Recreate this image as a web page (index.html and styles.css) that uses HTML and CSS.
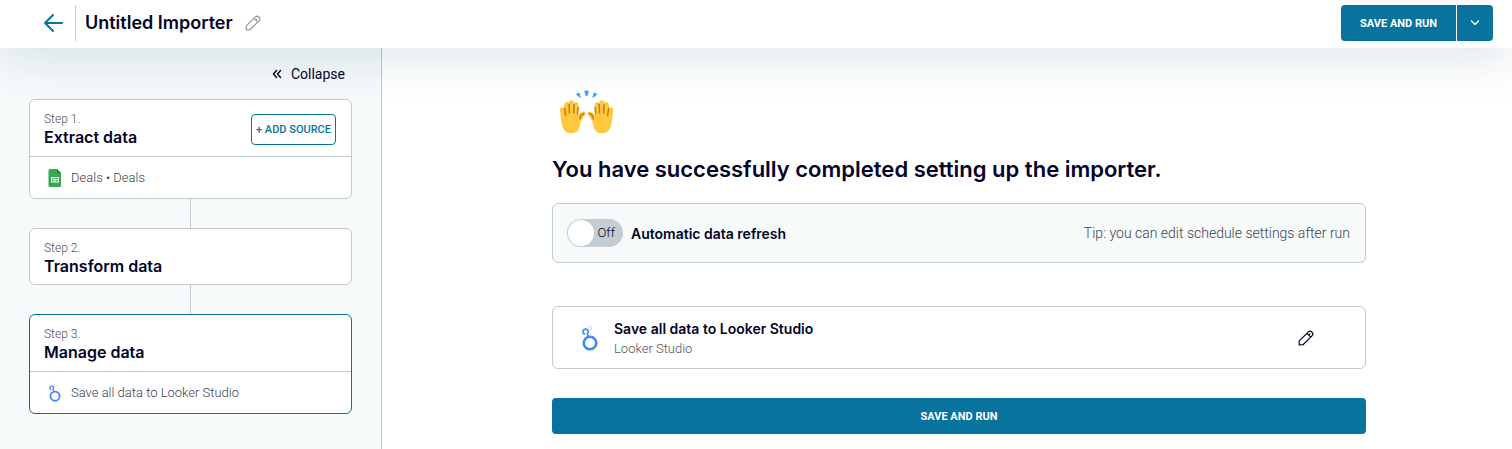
FILE: index.html
```html
<!DOCTYPE html>
<html lang="en">
<head>
    <meta charset="UTF-8">
    <meta name="viewport" content="width=device-width, initial-scale=1.0">
    <title>Untitled Importer</title>
    <link rel="stylesheet" href="styles.css">
</head>
<body>
    <!-- shared icons -->
    <svg class="icon-defs" aria-hidden="true">
        <symbol id="icon-pencil" viewBox="0 0 16 16">
            <path d="M1.2 14.8 1.3 10.9 10.4 1.8a2.2 2.2 0 0 1 3.1 0l.7.7a2.2 2.2 0 0 1 0 3.1L5 14.7zM9 3.4l3.7 3.7M10.7 5.1l1.5-1.5" fill="none" stroke="currentColor" stroke-width="1.2" stroke-linejoin="round"/>
        </symbol>
        <symbol id="icon-looker" viewBox="0 0 18 26">
            <circle cx="9" cy="18" r="6.3" fill="none" stroke="#4285f4" stroke-width="2.5"/>
            <path d="M4 9.200A2.600 2.600 0 1 1 7 7.500M7.200 6.500 6.300 8.800 7.300 11.500" fill="none" stroke="#4285f4" stroke-width="1.7"/>
            <circle cx="9" cy="3.200" r="1.800" fill="none" stroke="#d6e5fb" stroke-width="1.2"/>
        </symbol>
    </svg>

    <header class="header">
        <button class="icon-button back" aria-label="Back">
            <svg width="20" height="20" viewBox="0 0 20 20" fill="none" stroke="currentColor" stroke-width="2" stroke-linecap="round" stroke-linejoin="round">
                <path d="M19 10H2M10 2 2 10l8 8"/>
            </svg>
        </button>
        <div class="header-title">
            <h1>Untitled Importer</h1>
            <button class="icon-button rename" aria-label="Rename">
                <svg width="16" height="16"><use href="#icon-pencil"/></svg>
            </button>
        </div>
        <div class="button-group">
            <button class="button">SAVE AND RUN</button>
            <button class="button button-more" aria-label="More options">
                <svg width="10" height="6" viewBox="0 0 10 6" fill="none" stroke="currentColor" stroke-width="1.3" stroke-linecap="round" stroke-linejoin="round">
                    <path d="M1.5 1 5 4.5 8.5 1"/>
                </svg>
            </button>
        </div>
    </header>

    <div class="layout">
        <aside class="sidebar">
            <button class="collapse">
                <svg width="10" height="10" viewBox="0 0 10 10" fill="none" stroke="currentColor" stroke-width="1.5" stroke-linecap="round" stroke-linejoin="round">
                    <path d="M4.500 1.500 1.500 5l3 3.500M8.500 1.500 5.500 5l3 3.500"/>
                </svg>
                Collapse
            </button>

            <ol class="steps">
                <li class="step">
                    <div class="step-head">
                        <div>
                            <div class="step-number">Step 1.</div>
                            <h2>Extract data</h2>
                        </div>
                        <button class="button-outline">+ ADD SOURCE</button>
                    </div>
                    <div class="step-item">
                        <svg width="14" height="18" viewBox="0 0 14 18">
                            <path d="M2 0h7l4 4v12.500a1.500 1.500 0 0 1-1.500 1.500H2A1.500 1.500 0 0 1 .5 16.500v-15A1.500 1.500 0 0 1 2 0z" fill="#34a853"/>
                            <path d="M9 0l4 4H9z" fill="#188038"/>
                            <path d="M3 8h8v5.500H3z" fill="#fff"/>
                            <path d="M4 9h2.500v1.300H4zM7.500 9H10v1.300H7.500zM4 11.300h2.500v1.200H4zM7.500 11.300H10v1.200H7.500z" fill="#34a853"/>
                        </svg>
                        Deals • Deals
                    </div>
                </li>
                <li class="step">
                    <div class="step-head">
                        <div>
                            <div class="step-number">Step 2.</div>
                            <h2>Transform data</h2>
                        </div>
                    </div>
                </li>
                <li class="step active">
                    <div class="step-head">
                        <div>
                            <div class="step-number">Step 3.</div>
                            <h2>Manage data</h2>
                        </div>
                    </div>
                    <div class="step-item">
                        <svg width="14" height="19"><use href="#icon-looker"/></svg>
                        Save all data to Looker Studio
                    </div>
                </li>
            </ol>
        </aside>

        <main class="content">
            <svg class="hands" width="69" height="44" viewBox="0 0 69 44" aria-hidden="true">
                <defs>
                    <g id="hand">
                        <path d="M8 19.500C7.800 17 11 16.500 11.800 18.500L12.500 14C12.600 11.500 16.500 11.500 17 13.500V12.500C17 9.500 21.700 9.500 21.800 12.500V14C22 11.500 26.700 11.500 26.500 14.500L26 25 29.500 22C31.500 20.500 34.500 22 33.200 24.500L28.500 32C28 36 27 39 25.500 41 23 44 15.500 44 13 41 9.500 37 9 30 8 19.500z" fill="#ffc83d"/>
                        <path d="M12.500 18.500l1.200 7M17.200 14.500l.2 8.500M22 14.500l-.3 8.500M26.200 17.500l-.7 6.500M32 23.500c-2.800 1-4 3-4 5.500" fill="none" stroke="#c67b17" stroke-width="1.500" stroke-linecap="round"/>
                    </g>
                </defs>
                <use href="#hand"/>
                <use href="#hand" transform="matrix(-1 0 0 1 69.200 0)"/>
                <path d="M32.200 1c1-.7 3.800-.7 4.800 0l-1.600 5.300h-1.600zM24 4.500c.5-1 2-2 3.300-2l1.500 4.800-.8.500zM45.200 4.500c-.5-1-2-2-3.300-2l-1.500 4.800.8.500z" fill="#3fa3f7"/>
            </svg>
            <h2 class="content-title">You have successfully completed setting up the importer.</h2>

            <section class="refresh">
                <label class="toggle">
                    <span class="toggle-switch">
                        <input type="checkbox" role="switch">
                        <span class="toggle-state">Off</span>
                    </span>
                    Automatic data refresh
                </label>
                <p>Tip: you can edit schedule settings after run</p>
            </section>

            <section class="destination">
                <svg width="18" height="26"><use href="#icon-looker"/></svg>
                <div class="destination-text">
                    <h3>Save all data to Looker Studio</h3>
                    <p>Looker Studio</p>
                </div>
                <button class="icon-button" aria-label="Edit destination">
                    <svg width="16" height="16"><use href="#icon-pencil"/></svg>
                </button>
            </section>

            <button class="button button-wide">SAVE AND RUN</button>
        </main>
    </div>
</body>
</html>
```

FILE: styles.css
```css
* {
    box-sizing: border-box;
}

body {
    margin: 0;
    min-height: 100vh;
    display: flex;
    flex-direction: column;
    font-family: Roboto, "Liberation Sans", sans-serif;
    font-size: 14px;
    color: #03042a;
    background: #fff;
}

h1, h2, h3, p {
    margin: 0;
}

h1, h2, h3 {
    font-family: Inter, "Liberation Sans", sans-serif;
    font-weight: 600;
}

button {
    font-family: inherit;
    cursor: pointer;
}

svg {
    display: block;
    flex: none;
}

.icon-defs {
    position: absolute;
    width: 0;
    height: 0;
}

/* Header */
.header {
    position: relative;
    z-index: 1;
    display: flex;
    align-items: center;
    height: 48px;
    padding: 0 19px 2px 43px;
    background: #fff;
    box-shadow: 0 8px 50px rgba(0, 62, 87, 0.15);
}

.icon-button {
    padding: 0;
    border: none;
    background: none;
    color: inherit;
}

.back {
    color: #08749e;
}

.header-title {
    display: flex;
    align-items: center;
    gap: 12px;
    height: 36px;
    margin-left: 12px;
    padding-left: 9px;
    border-left: 1px solid #c4cdd3;
}

.header-title h1 {
    font-size: 18px;
    line-height: 24px;
}

.rename {
    color: #8b979f;
}

.button-group {
    display: flex;
    gap: 1px;
    margin-left: auto;
}

.button {
    height: 36px;
    padding: 0 19px;
    border: none;
    border-radius: 4px;
    background: #08749e;
    color: #fff;
    font-size: 11px;
    font-weight: 700;
}

.button-group .button:first-child {
    border-radius: 4px 0 0 4px;
}

.button-group .button-more {
    padding: 0 13px;
    border-radius: 0 4px 4px 0;
}

/* Sidebar */
.layout {
    flex: 1;
    display: flex;
}

.sidebar {
    flex: none;
    width: 382px;
    padding: 16px 29px;
    border-right: 1px solid #c1cbd0;
    background: #f6fafb;
}

.collapse {
    display: flex;
    align-items: center;
    gap: 9px;
    margin: 0 7px 15px auto;
    padding: 0;
    border: none;
    background: none;
    color: inherit;
    font-size: 14px;
    line-height: 20px;
}

.steps {
    display: flex;
    flex-direction: column;
    gap: 29px;
    margin: 0;
    padding: 0;
    list-style: none;
}

.step {
    position: relative;
    border: 1px solid #c1cbd0;
    border-radius: 6px;
    background: #fff;
}

/* line to the next step */
.step:not(:last-child)::after {
    content: "";
    position: absolute;
    top: 100%;
    left: calc(50% - 1px);
    height: 30px;
    border-left: 1px solid #c1cbd0;
}

.step.active {
    border-color: #08749e;
}

.step-head {
    display: flex;
    align-items: center;
    justify-content: space-between;
    padding: 11px 15px 8px 14px;
}

.step-number {
    color: #505260;
    font-size: 12px;
    font-weight: 300;
    line-height: 16px;
}

.step-head h2 {
    font-size: 16px;
    line-height: 20px;
}

.button-outline {
    height: 31px;
    padding: 0 4px;
    border: 1px solid #08749e;
    border-radius: 4px;
    background: #fff;
    color: #08749e;
    font-size: 11px;
    font-weight: 500;
}

.step-item {
    display: flex;
    align-items: center;
    gap: 9px;
    height: 42px;
    margin-top: 1px;
    padding: 0 18px;
    border-top: 1px solid #c1cbd0;
    color: #414350;
    font-size: 13px;
    font-weight: 300;
}

/* Content */
.content {
    flex: 1;
    display: flex;
    flex-direction: column;
    padding: 42px 146px 15px 170px;
}

.content-title {
    margin: 20px 0 19px;
    font-size: 22px;
    line-height: 30px;
}

.refresh,
.destination {
    display: flex;
    align-items: center;
    border: 1px solid #c1cbd0;
    border-radius: 6px;
}

.refresh {
    justify-content: space-between;
    height: 60px;
    padding: 0 15px 0 14px;
    background: #f6fafb;
}

.refresh p {
    color: #414350;
    font-weight: 300;
}

.toggle {
    display: flex;
    align-items: center;
    gap: 8px;
    font-family: Inter, "Liberation Sans", sans-serif;
    font-weight: 600;
}

.toggle-switch {
    position: relative;
    display: flex;
}

.toggle-switch input {
    appearance: none;
    width: 56px;
    height: 28px;
    margin: 0;
    border-radius: 14px;
    background: #c4cdd3;
}

.toggle-switch input::before {
    content: "";
    display: block;
    width: 26px;
    height: 26px;
    margin: 1px;
    border-radius: 50%;
    background: #fff;
}

.toggle-state {
    position: absolute;
    right: 8px;
    top: 4px;
    font-family: Roboto, "Liberation Sans", sans-serif;
    font-size: 13px;
    font-weight: 300;
    line-height: 20px;
}

.destination {
    gap: 15px;
    height: 63px;
    margin: 43px 0 29px;
    padding: 0 51px 0 28px;
}

.destination-text {
    flex: 1;
    padding-top: 2px;
}

.destination-text h3 {
    font-size: 14px;
    font-weight: 600;
    line-height: 20px;
}

.destination-text p {
    color: #505260;
    font-size: 13px;
    font-weight: 300;
    line-height: 20px;
}
```
